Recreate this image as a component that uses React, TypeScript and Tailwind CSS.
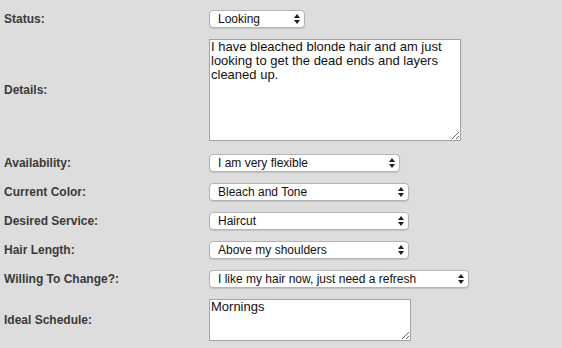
import React from "react";

type Row =
  | { label: string; kind: "select"; value: string; width: string }
  | { label: string; kind: "text"; value: string; width: string; height: string };

const rows: Row[] = [
  { label: "Status:", kind: "select", value: "Looking", width: "w-[96px]" },
  {
    label: "Details:",
    kind: "text",
    value:
      "I have bleached blonde hair and am just looking to get the dead ends and layers cleaned up.",
    width: "w-[252px]",
    height: "h-[102px]",
  },
  { label: "Availability:", kind: "select", value: "I am very flexible", width: "w-[191px]" },
  { label: "Current Color:", kind: "select", value: "Bleach and Tone", width: "w-[200px]" },
  { label: "Desired Service:", kind: "select", value: "Haircut", width: "w-[200px]" },
  { label: "Hair Length:", kind: "select", value: "Above my shoulders", width: "w-[200px]" },
  {
    label: "Willing To Change?:",
    kind: "select",
    value: "I like my hair now, just need a refresh",
    width: "w-[260px]",
  },
  { label: "Ideal Schedule:", kind: "text", value: "Mornings", width: "w-[202px]", height: "h-[42px]" },
];

const Arrows = () => (
  <svg
    className="absolute right-[5px] top-1/2 -translate-y-1/2 pointer-events-none"
    width="6"
    height="11"
    viewBox="0 0 6 11"
  >
    <path d="M3 0.5 L6 4.6 L0 4.6 Z" fill="#1e1e1e" />
    <path d="M3 10.5 L6 6.4 L0 6.4 Z" fill="#1e1e1e" />
  </svg>
);

const FakeSelect = ({ value, width }: { value: string; width: string }) => (
  <div className={`relative ${width} h-[18px]`}>
    <select
      defaultValue={value}
      className="block appearance-none w-full h-full bg-white border border-[#b4b4b4] rounded-[4px] shadow-[0_1px_1px_rgba(0,0,0,0.12)] pl-[8px] pr-5 py-0 text-[12px] leading-[16px] text-[#111] outline-none"
      style={{ fontFamily: '"Liberation Sans", Arial, sans-serif' }}
    >
      <option>{value}</option>
    </select>
    <Arrows />
  </div>
);

export default function App() {
  return (
    <div
      className="w-[562px] h-[348px] bg-[#dddddd] overflow-hidden pt-[10px] pl-[4px]"
      style={{ fontFamily: '"Liberation Sans", Arial, sans-serif' }}
    >
      <div className="grid grid-cols-[205px_auto] gap-y-[11px] items-center">
        {rows.map((row, i) => (
          <React.Fragment key={row.label}>
            <div
              className={`text-[12px] font-bold text-[#3a3a3a] leading-[14px] ${
                i === 2 ? "mt-[2px]" : ""
              }`}
            >
              {row.label}
            </div>
            <div className={i === 2 ? "mt-[2px]" : ""}>
              {row.kind === "select" ? (
                <FakeSelect value={row.value} width={row.width} />
              ) : (
                <textarea
                  defaultValue={row.value}
                  className={`block ${row.width} ${row.height} bg-white border border-[#a3a3a3] px-[1px] py-0 text-[13px] leading-[14px] text-[#111] outline-none`}
                  style={{ fontFamily: '"Liberation Sans", Arial, sans-serif' }}
                />
              )}
            </div>
          </React.Fragment>
        ))}
      </div>
    </div>
  );
}
